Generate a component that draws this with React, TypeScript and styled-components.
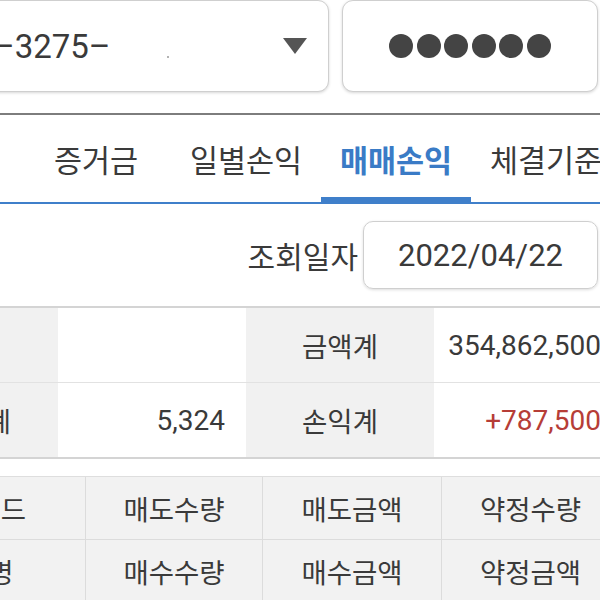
import React from "react";
import styled, { createGlobalStyle } from "styled-components";

// ================= Global =================
const GlobalStyle = createGlobalStyle`
  html, body {
    margin: 0;
    padding: 0;
    background: #ffffff;
  }
  body {
    font-family: Roboto, "Noto Sans CJK KR", sans-serif;
    color: #383838;
  }
  * { box-sizing: border-box; }
`;

const Screen = styled.div`
  width: 600px;
  height: 600px;
  overflow: hidden;
  background: #ffffff;
`;

// ================= Account bar =================
const AccountBar = styled.div`
  display: flex;
  gap: 13px;
  height: 92px;
  margin-left: -40px;
`;

const InputBox = styled.div<{ $width: number }>`
  width: ${(p) => p.$width}px;
  height: 92px;
  flex: none;
  display: flex;
  align-items: center;
  border: 1px solid #cfcfcf;
  border-radius: 11px;
  background: #ffffff;
  box-shadow: 0 1px 3px rgba(0, 0, 0, 0.16);
`;

const SelectBox = styled(InputBox)`
  padding: 0 21px 0 32px;
`;

const AccountNo = styled.span`
  font-size: 33px;
  color: #3a3a3a;
`;

const MaskDot = styled.span`
  width: 2px;
  height: 2px;
  margin: 22px 0 0 56px;
  background: #9a9a9a;
  border-radius: 1px;
`;

const Spacer = styled.div`
  flex: 1;
`;

const PasswordBox = styled(InputBox)`
  justify-content: center;
  gap: 3.6px;
`;

const PinDot = styled.span`
  width: 24px;
  height: 24px;
  border-radius: 50%;
  background: #444444;
`;

const Divider = styled.div`
  margin-top: 21px;
  height: 2px;
  background: #7d7d7d;
`;

// ================= Tabs =================
const TabBar = styled.div`
  display: flex;
  margin-left: -129px;
  border-bottom: 2px solid #3f7fca;
`;

const Tab = styled.div<{ $active?: boolean }>`
  flex: 0 0 150px;
  height: 87px;
  padding-top: 6px;
  display: flex;
  align-items: center;
  justify-content: center;
  font-size: 30.5px;
  white-space: nowrap;
  font-weight: ${(p) => (p.$active ? 700 : 400)};
  color: ${(p) => (p.$active ? "#3a7bc6" : "#3a3a3a")};
  border-bottom: 5px solid ${(p) => (p.$active ? "#3f7fca" : "transparent")};
`;

// ================= Date row =================
const DateRow = styled.div`
  height: 102px;
  display: flex;
  align-items: center;
  justify-content: flex-end;
  gap: 5px;
  padding-right: 2px;
`;

const DateLabel = styled.span`
  font-size: 30px;
  color: #3a3a3a;
`;

const DateBox = styled.div`
  width: 235px;
  height: 68px;
  display: flex;
  align-items: center;
  justify-content: center;
  border: 1px solid #cfcfcf;
  border-radius: 10px;
  box-shadow: 0 1px 3px rgba(0, 0, 0, 0.14);
  font-size: 31px;
  color: #3a3a3a;
`;

// ================= Summary =================
const Summary = styled.div`
  display: grid;
  grid-template-columns: 170px 188px 188px 188px;
  margin-left: -112px;
  border-top: 2px solid #d4d4d4;
  border-bottom: 2px solid #d4d4d4;
`;

const SumCell = styled.div<{ $label?: boolean; $last?: boolean; $red?: boolean }>`
  height: ${(p) => (p.$last ? 74 : 75)}px;
  display: flex;
  align-items: center;
  justify-content: ${(p) => (p.$label ? "center" : "flex-end")};
  padding-right: ${(p) => (p.$label ? 0 : 21)}px;
  background: ${(p) => (p.$label ? "#f1f1f1" : "#ffffff")};
  border-bottom: ${(p) => (p.$last ? "none" : "1px solid #e2e2e2")};
  font-size: ${(p) => (p.$label ? 27.5 : 28)}px;
  color: ${(p) => (p.$red ? "#b63d37" : "#3a3a3a")};
  white-space: nowrap;
`;

// ================= List header =================
const ListHeader = styled.div`
  display: grid;
  grid-template-columns: 220px 177px 179px 178px;
  margin: 17px 0 0 -134px;
  border-top: 1px solid #dedede;
`;

const HeadCell = styled.div`
  height: 63px;
  display: flex;
  align-items: center;
  justify-content: center;
  background: #f2f2f2;
  border-right: 1px solid #dcdcdc;
  border-bottom: 1px solid #dcdcdc;
  font-size: 27.5px;
  color: #3a3a3a;
  white-space: nowrap;
`;

const Caret = () => (
  <svg width="24" height="16" viewBox="0 0 24 16">
    <polygon points="0,0 24,0 12,16" fill="#555555" />
  </svg>
);

const tabs = ["잔고", "증거금", "일별손익", "매매손익", "체결기준"];
const headers = [
  ["종목코드", "매도수량", "매도금액", "약정수량"],
  ["종목명", "매수수량", "매수금액", "약정금액"],
];

const App = () => {
  return (
    <Screen>
      <GlobalStyle />
      <AccountBar>
        <SelectBox $width={369}>
          <AccountNo>–3275–</AccountNo>
          <MaskDot />
          <Spacer />
          <Caret />
        </SelectBox>
        <PasswordBox $width={256}>
          {Array.from({ length: 6 }).map((_, i) => (
            <PinDot key={i} />
          ))}
        </PasswordBox>
      </AccountBar>
      <Divider />

      <TabBar>
        {tabs.map((t) => (
          <Tab key={t} $active={t === "매매손익"}>
            {t}
          </Tab>
        ))}
      </TabBar>

      <DateRow>
        <DateLabel>조회일자</DateLabel>
        <DateBox>2022/04/22</DateBox>
      </DateRow>

      <Summary>
        <SumCell $label>건수</SumCell>
        <SumCell />
        <SumCell $label>금액계</SumCell>
        <SumCell>354,862,500</SumCell>
        <SumCell $label $last>수량계</SumCell>
        <SumCell $last>5,324</SumCell>
        <SumCell $label $last>손익계</SumCell>
        <SumCell $last $red>+787,500</SumCell>
      </Summary>

      <ListHeader>
        {headers.flat().map((h) => (
          <HeadCell key={h}>{h}</HeadCell>
        ))}
      </ListHeader>
    </Screen>
  );
};

export default App;
